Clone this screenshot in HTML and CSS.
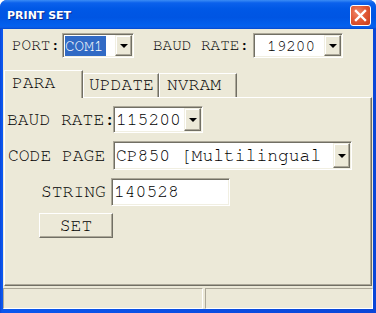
FILE: index.html
```html
<!DOCTYPE html>
<html lang="en">
<head>
    <meta charset="UTF-8">
    <meta name="viewport" content="width=device-width, initial-scale=1.0">
    <title>PRINT SET</title>
    <link rel="stylesheet" href="styles.css">
</head>
<body>
    <div class="window">
        <div class="titlebar">
            <span class="title">PRINT SET</span>
            <span class="close">
                <svg width="13" height="13" viewBox="0 0 13 13">
                    <path d="M2 2 L11 11 M11 2 L2 11" stroke="#fff" stroke-width="2.4" stroke-linecap="square"/>
                </svg>
            </span>
        </div>
        <div class="frame">
            <div class="client">
                <div class="toprow">
                    <span class="lbl">PORT:</span>
                    <div class="combo port">
                        <span class="field"><span class="sel">COM1</span></span>
                        <span class="drop"><i class="arrow"></i></span>
                    </div>
                    <span class="lbl baud-lbl">BAUD RATE:</span>
                    <div class="combo baud">
                        <span class="field">19200</span>
                        <span class="drop"><i class="arrow"></i></span>
                    </div>
                </div>

                <div class="tabs">
                    <div class="tab active tab-para">PARA</div>
                    <div class="tab tab-update">UPDATE</div>
                    <div class="tab tab-nvram">NVRAM</div>
                </div>

                <div class="panel">
                    <div class="row row-baud">
                        <span class="plbl">BAUD RATE:</span>
                        <div class="combo big baud2">
                            <span class="field">115200</span>
                            <span class="drop"><i class="arrow"></i></span>
                        </div>
                    </div>
                    <div class="row row-code">
                        <span class="plbl">CODE PAGE</span>
                        <div class="combo big code">
                            <span class="field">CP850 [Multilingual</span>
                            <span class="drop"><i class="arrow"></i></span>
                        </div>
                    </div>
                    <div class="row row-string">
                        <span class="plbl">STRING</span>
                        <div class="textbox">140528</div>
                    </div>
                    <div class="row row-set">
                        <button class="btn">SET</button>
                    </div>
                </div>

                <div class="status">
                    <div class="pane pane-left"></div>
                    <div class="pane pane-right"></div>
                </div>
            </div>
        </div>
    </div>
</body>
</html>
```

FILE: styles.css
```css
body {
    margin: 0;
    font-family: "Nimbus Mono PS", "Nimbus Mono L", FreeMono, "Courier New", "Liberation Mono", monospace;
    background: #ffffff;
}
.window {
    width: 376px;
    height: 313px;
    display: flex;
    flex-direction: column;
    border-radius: 7px 7px 0 0;
    overflow: hidden;
    background: #0842d6;
}
.titlebar {
    height: 29px;
    display: flex;
    align-items: center;
    justify-content: space-between;
    padding: 0 5px 0 7px;
    background: linear-gradient(to bottom, #3b8cf5 0%, #0b61ec 10%, #0058e6 30%, #0055e3 60%, #0260ee 88%, #0a5de8 94%, #0048d0 100%);
}
.title {
    color: #ffffff;
    font-family: "DejaVu Sans", Verdana, sans-serif;
    font-weight: bold;
    font-size: 11px;
    text-shadow: 1px 1px 0 #0a2a8c;
    margin-top: 2px;
}
.close {
    width: 19px;
    height: 19px;
    border: 1px solid #ffffff;
    border-radius: 3px;
    background: radial-gradient(circle at 35% 35%, #f08a6c 0%, #e25a36 45%, #c63a18 100%);
    display: flex;
    align-items: center;
    justify-content: center;
    margin-top: 1px;
}
.frame {
    flex: 1;
    display: flex;
    padding: 0 3px 4px 3px;
    background: linear-gradient(to right, #0a46d8, #0b57ee 2px, #0a46d8);
}
.client {
    flex: 1;
    background: #ece9d8;
    display: flex;
    flex-direction: column;
}

/* top row */
.toprow {
    height: 41px;
    box-sizing: border-box;
    display: flex;
    align-items: flex-start;
    padding: 4px 0 0 9px;
    font-size: 16px;
}
.lbl {
    line-height: 25px;
    color: #000000;
}
.baud-lbl {
    margin-left: 19px;
}
.combo {
    box-sizing: border-box;
    height: 25px;
    display: flex;
    border: 1px solid;
    border-color: #aca899 #ffffff #ffffff #aca899;
    background: #ffffff;
    box-shadow: inset 1px 1px 0 #716f64, inset -1px -1px 0 #f1efe2;
    padding: 1px;
}
.combo.port {
    width: 72px;
    margin-left: 2px;
}
.combo.baud {
    width: 90px;
    margin-left: 4px;
}
.field {
    flex: 1;
    overflow: hidden;
    white-space: nowrap;
    display: flex;
    align-items: center;
    color: #000000;
}
.port .field {
    padding-left: 1px;
}
.baud .field {
    padding-left: 12px;
}
.sel {
    background: #316ac5;
    color: #ffffff;
    line-height: 20px;
    padding-right: 3px;
}
.drop {
    width: 17px;
    box-sizing: border-box;
    background: #ece9d8;
    border: 1px solid;
    border-color: #f1efe2 #716f64 #716f64 #f1efe2;
    box-shadow: inset -1px -1px 0 #aca899, inset 1px 1px 0 #ffffff;
    display: flex;
    align-items: center;
    justify-content: center;
}
.arrow {
    width: 0;
    height: 0;
    border-left: 4px solid transparent;
    border-right: 4px solid transparent;
    border-top: 4px solid #000000;
}

/* tabs */
.tabs {
    height: 27px;
    display: flex;
    align-items: flex-end;
    padding-left: 1px;
    font-size: 18px;
    position: relative;
    z-index: 1;
}
.tab {
    box-sizing: border-box;
    height: 24px;
    padding-left: 5px;
    line-height: 22px;
    border-top: 1px solid #ffffff;
    border-left: 1px solid #ffffff;
    border-right: 1px solid #716f64;
    box-shadow: inset -1px 0 0 #aca899;
    background: #ece9d8;
}
.tab-para {
    width: 79px;
}
.tab-update {
    width: 76px;
}
.tab-nvram {
    width: 78px;
    padding-left: 7px;
}
.tab.active {
    height: 28px;
    margin-bottom: -1px;
    padding-left: 7px;
    line-height: 24px;
}

/* panel */
.panel {
    box-sizing: border-box;
    height: 189px;
    margin: 0 1px;
    padding-top: 8px;
    border-top: 1px solid #ffffff;
    border-left: 1px solid #ffffff;
    border-right: 1px solid #716f64;
    border-bottom: 1px solid #716f64;
    box-shadow: inset -1px -1px 0 #aca899;
    font-size: 18px;
    display: flex;
    flex-direction: column;
}
.row {
    display: flex;
    align-items: center;
}
.plbl {
    color: #000000;
    white-space: nowrap;
}
.row-baud {
    padding-left: 2px;
}
.row-baud .plbl {
    width: 106px;
}
.row-code {
    margin-top: 8px;
    padding-left: 3px;
}
.row-code .plbl {
    width: 105px;
}
.row-string {
    margin-top: 8px;
    padding-left: 36px;
}
.row-string .plbl {
    width: 70px;
}
.row-set {
    margin-top: 7px;
    padding-left: 34px;
}
.combo.big {
    height: 27px;
}
.combo.baud2 {
    width: 90px;
}
.combo.code {
    width: 239px;
    height: 29px;
}
.big .field {
    padding-left: 1px;
}
.textbox {
    box-sizing: border-box;
    width: 119px;
    height: 28px;
    border: 1px solid;
    border-color: #aca899 #ffffff #ffffff #aca899;
    box-shadow: inset 1px 1px 0 #716f64, inset -1px -1px 0 #f1efe2;
    background: #ffffff;
    padding: 1px 0 0 2px;
    line-height: 24px;
    color: #000000;
}
.btn {
    box-sizing: border-box;
    width: 74px;
    height: 25px;
    font-family: inherit;
    font-size: 18px;
    color: #000000;
    background: #ece9d8;
    border: 1px solid;
    border-color: #ffffff #716f64 #716f64 #ffffff;
    box-shadow: inset -1px -1px 0 #aca899;
    padding: 0;
}

/* status bar */
.status {
    margin-top: 2px;
    height: 21px;
    display: flex;
    gap: 2px;
}
.pane {
    box-sizing: border-box;
    border: 1px solid;
    border-color: #aca899 #ffffff #ffffff #aca899;
}
.pane-left {
    width: 200px;
}
.pane-right {
    flex: 1;
}
```
